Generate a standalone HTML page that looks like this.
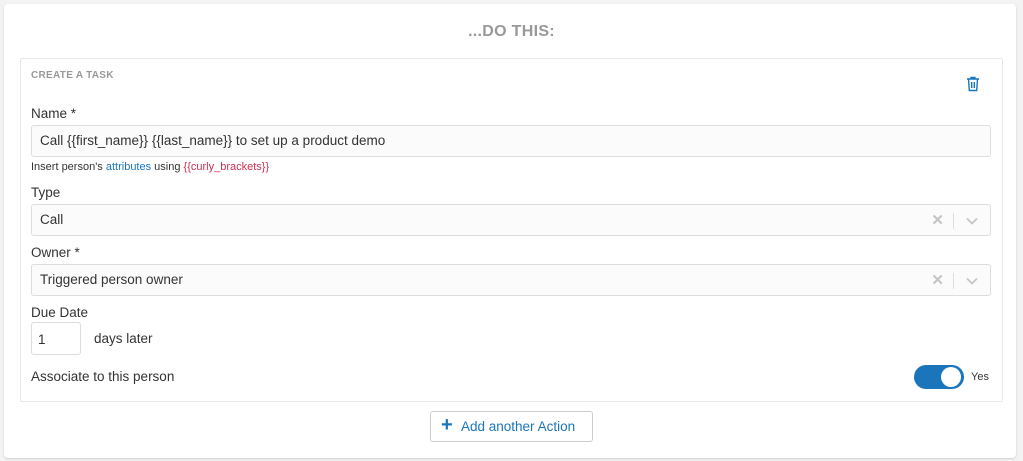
<!DOCTYPE html>
<html><head><style>
body{margin:0;width:1023px;height:461px;background:#f3f3f3;font-family:"Liberation Sans",sans-serif;position:relative;overflow:hidden;color:#333}
.card{position:absolute;left:4px;top:4px;width:1012px;height:454px;background:#fff;border-radius:4px;box-shadow:0 1px 2px rgba(0,0,0,.15)}
.a{position:absolute}
.h{left:0;width:1023px;top:23px;text-align:center;font-weight:bold;font-size:16px;color:#999;letter-spacing:.3px}
.box{left:20px;top:58px;width:981px;height:342px;border:1px solid #e6e6e6;border-radius:2px}
.lbl{font-size:13.5px;color:#333}
.inp{left:31px;height:30px;border:1px solid #ddd;border-radius:3px;background:#fbfbfb;font-size:13.5px;line-height:30px;padding-left:8px;width:950px}
.x{position:absolute;right:46px;top:1px;color:#c4c4c4;font-size:15px;font-weight:bold}
.sep{position:absolute;right:36px;top:8px;width:1px;height:16px;background:#ddd}
.chev{position:absolute;right:12px;top:12px}
</style></head><body>
<div class="card"></div>
<div class="a h">...DO THIS:</div>
<div class="a box"></div>
<div class="a" style="left:31px;top:70px;font-size:10px;font-weight:bold;color:#999;letter-spacing:.3px">CREATE A TASK</div>
<svg class="a" style="left:966px;top:76px" width="14" height="16" viewBox="0 0 14 16" fill="none" stroke="#1a75bb" stroke-width="1.4"><path d="M1 3h12M5 3V1.5h4V3M2.5 3l.8 11.5h7.4L11.5 3M5.7 6v6M8.3 6v6"/></svg>
<div class="a lbl" style="left:31px;top:106px">Name *</div>
<div class="a inp" style="top:125px">Call {{first_name}} {{last_name}} to set up a product demo</div>
<div class="a" style="left:31px;top:161px;font-size:11px">Insert person's <span style="color:#1a75bb">attributes</span> using <span style="color:#d0304f">{{curly_brackets}}</span></div>
<div class="a lbl" style="left:31px;top:185px">Type</div>
<div class="a inp" style="top:204px">Call<span class="x">✕</span><span class="sep"></span><svg class="chev" width="12" height="8" viewBox="0 0 12 8"><path d="M1 1.5l5 5 5-5" stroke="#c4c4c4" stroke-width="1.8" fill="none"/></svg></div>
<div class="a lbl" style="left:31px;top:245px">Owner *</div>
<div class="a inp" style="top:264px">Triggered person owner<span class="x">✕</span><span class="sep"></span><svg class="chev" width="12" height="8" viewBox="0 0 12 8"><path d="M1 1.5l5 5 5-5" stroke="#c4c4c4" stroke-width="1.8" fill="none"/></svg></div>
<div class="a lbl" style="left:31px;top:305px">Due Date</div>
<div class="a" style="left:31px;top:322px;height:33px;border:1px solid #ddd;border-radius:3px;font-size:13.5px;line-height:33px;padding-left:6px;box-sizing:border-box;width:50px">1</div>
<div class="a lbl" style="left:94px;top:331px">days later</div>
<div class="a lbl" style="left:31px;top:369px">Associate to this person</div>
<div class="a" style="left:914px;top:365px;width:50px;height:24px;border-radius:12px;background:#1a75bb"></div>
<div class="a" style="left:941px;top:367px;width:20px;height:20px;border-radius:50%;background:#fff"></div>
<div class="a" style="left:971px;top:371px;font-size:11px">Yes</div>
<div class="a" style="left:430px;top:411px;width:163px;height:31px;border:1px solid #ccc;border-radius:3px;box-sizing:border-box;color:#1a75bb;font-size:13.5px;line-height:29px"><span style="position:absolute;left:10px;top:-1px;font-size:20px;font-weight:bold">+</span><span style="position:absolute;left:30px">Add another Action</span></div>
</body></html>
